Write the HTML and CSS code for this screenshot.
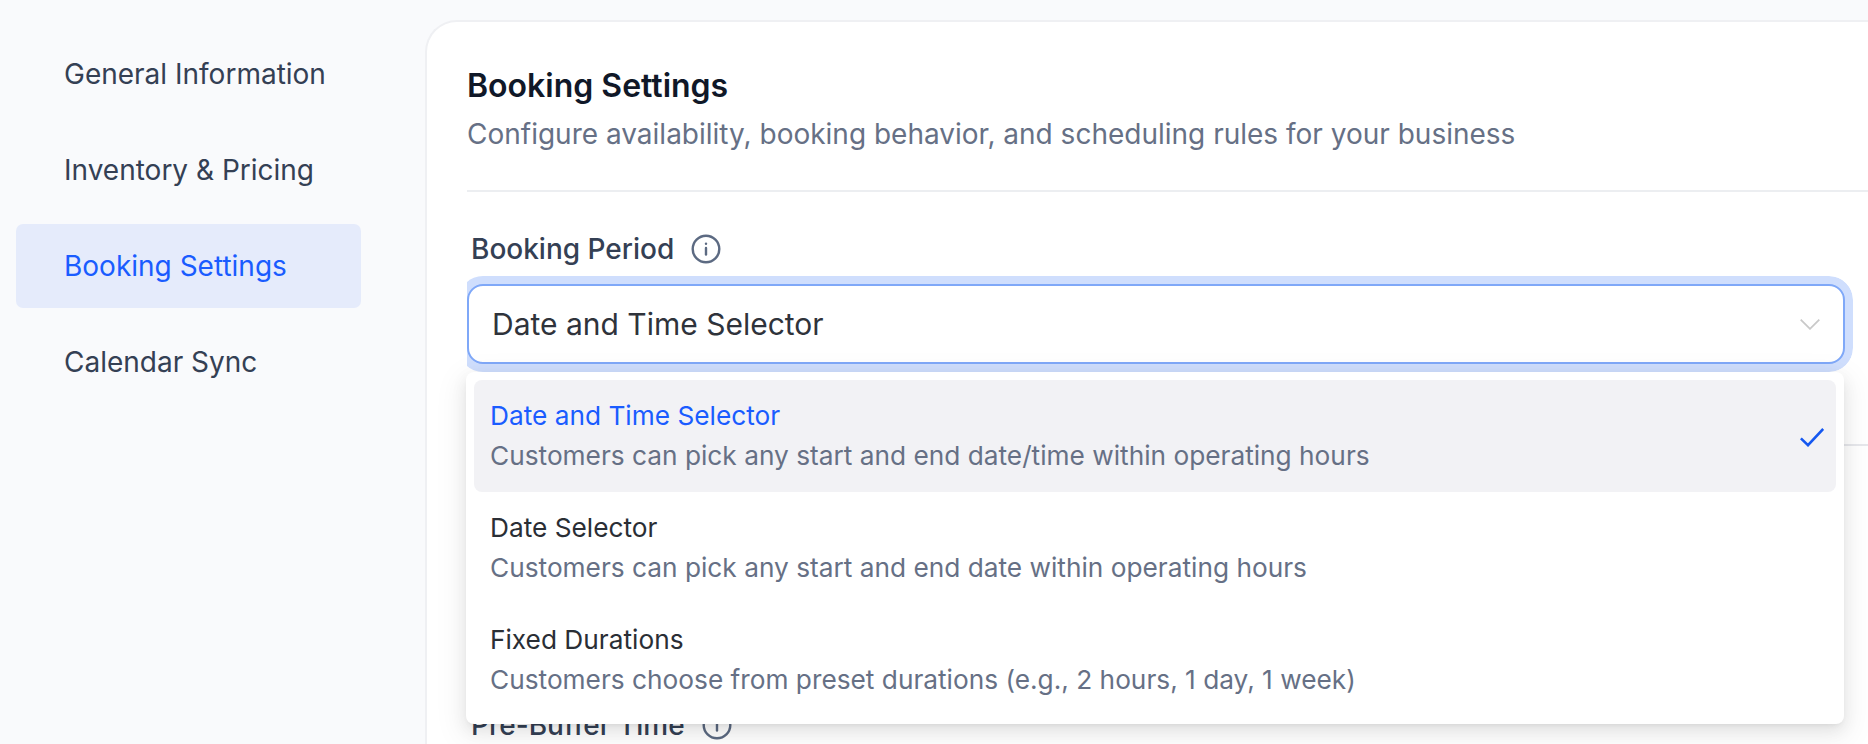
FILE: index.html
```html
<!DOCTYPE html>
<html lang="en">
<head>
  <meta charset="UTF-8">
  <title>Booking Settings</title>
  <link rel="stylesheet" href="styles.css">
</head>
<body>
  <nav class="sidebar">
    <a class="nav-item" href="#">General Information</a>
    <a class="nav-item" href="#">Inventory &amp; Pricing</a>
    <a class="nav-item active" href="#">Booking Settings</a>
    <a class="nav-item" href="#">Calendar Sync</a>
  </nav>

  <main class="card">
    <header class="card-header">
      <h1>Booking Settings</h1>
      <p>Configure availability, booking behavior, and scheduling rules for your business</p>
    </header>

    <section class="field booking-period">
      <label class="field-label">
        Booking Period
        <svg class="info-icon" viewBox="0 0 30 30" fill="none" stroke="currentColor" stroke-width="2.4" stroke-linecap="round">
          <circle cx="15" cy="15" r="13.3"/>
          <path d="M15 14v6.5"/>
          <path d="M15 9.6v.2"/>
        </svg>
      </label>
      <div class="select">
        <span>Date and Time Selector</span>
        <svg class="chevron" viewBox="0 0 20 11" fill="none" stroke="currentColor" stroke-width="1.8">
          <path d="M.7.7 10 9.8 19.3.7"/>
        </svg>
      </div>
    </section>

    <section class="field pre-buffer">
      <label class="field-label">
        Pre-Buffer Time
        <svg class="info-icon" viewBox="0 0 30 30" fill="none" stroke="currentColor" stroke-width="2.4" stroke-linecap="round">
          <circle cx="15" cy="15" r="13.3"/>
          <path d="M15 14v6.5"/>
          <path d="M15 9.6v.2"/>
        </svg>
      </label>
    </section>
  </main>

  <div class="dropdown">
    <div class="option selected">
      <div class="option-text">
        <div class="option-title">Date and Time Selector</div>
        <div class="option-desc">Customers can pick any start and end date/time within operating hours</div>
      </div>
      <svg class="check" viewBox="0 0 24 19" fill="none" stroke="currentColor" stroke-width="2.6">
        <path d="M.9 10.4 8 17.2 23.2 1"/>
      </svg>
    </div>
    <div class="option">
      <div class="option-text">
        <div class="option-title">Date Selector</div>
        <div class="option-desc">Customers can pick any start and end date within operating hours</div>
      </div>
    </div>
    <div class="option">
      <div class="option-text">
        <div class="option-title">Fixed Durations</div>
        <div class="option-desc">Customers choose from preset durations (e.g., 2 hours, 1 day, 1 week)</div>
      </div>
    </div>
  </div>
</body>
</html>
```

FILE: styles.css
```css
html, body {
  height: 100%;
}

body {
  margin: 0;
  display: flex;
  overflow: hidden;
  background: #f9fafc;
  font-family: Inter, "Noto Sans", sans-serif;
  color: #344054;
}

.sidebar {
  flex: none;
  box-sizing: border-box;
  width: 345px;
  margin-left: 16px;
  padding-top: 32px;
  display: flex;
  flex-direction: column;
  gap: 12px;
}

.nav-item {
  height: 84px;
  box-sizing: border-box;
  display: flex;
  align-items: center;
  padding-left: 48px;
  border-radius: 7px;
  font-size: 28px;
  color: #344054;
  text-decoration: none;
}

.nav-item.active {
  background: #e5ebfb;
  color: #1a5cff;
}

.card {
  flex: none;
  width: 1600px;
  margin: 20px 0 0 64px;
  padding: 46px 40px 0;
  background: #fff;
  border: 2px solid #eff0f3;
  border-right: 0;
  border-bottom: 0;
  border-radius: 32px 0 0 0;
}

.card-header {
  padding-bottom: 36px;
  border-bottom: 2px solid #eceef1;
}

.card-header h1 {
  margin: 0;
  font-size: 32px;
  font-weight: 600;
  line-height: 36px;
  color: #101828;
}

.card-header p {
  margin: 10px 0 0;
  font-size: 28px;
  line-height: 40px;
  color: #667085;
}

.field-label {
  display: flex;
  align-items: center;
  gap: 17px;
  padding-left: 4px;
  font-size: 28px;
  font-weight: 500;
  line-height: 36px;
  color: #344054;
}

.info-icon {
  width: 30px;
  height: 30px;
  color: #5c6a82;
}

.booking-period {
  padding: 39px 0 80px;
  border-bottom: 2px solid #e7e8ec;
}

.booking-period .field-label {
  margin-bottom: 17px;
}

.select {
  width: 1378px;
  height: 80px;
  box-sizing: border-box;
  display: flex;
  align-items: center;
  justify-content: space-between;
  padding: 0 23px;
  border: 2px solid #7fa8f8;
  border-radius: 16px;
  box-shadow: 0 0 0 8px #cfdefd;
  clip-path: inset(-8px -8px -8px 0 round 0 24px 24px 0);
  background: #fff;
  font-size: 30px;
  color: #2f333b;
}

.chevron {
  width: 20px;
  height: 11px;
  color: #c9c9c9;
}

.pre-buffer {
  padding-top: 261px;
}

.dropdown {
  position: absolute;
  left: 466px;
  top: 372px;
  width: 1378px;
  box-sizing: border-box;
  padding: 8px;
  background: #fff;
  border-radius: 8px;
  box-shadow: 0 6px 16px 0 rgba(0, 0, 0, .08), 0 3px 6px -4px rgba(0, 0, 0, .12), 0 9px 28px 8px rgba(0, 0, 0, .05);
}

.option {
  height: 112px;
  box-sizing: border-box;
  display: flex;
  align-items: center;
  justify-content: space-between;
  padding: 0 12px 0 16px;
  border-radius: 8px;
}

.option.selected {
  background: #f2f2f5;
}

.option-title {
  font-size: 26.25px;
  line-height: 40px;
  color: #2a2e35;
}

.selected .option-title {
  color: #1a5cff;
}

.option-desc {
  font-size: 26.25px;
  line-height: 40px;
  color: #667085;
}

.check {
  width: 24px;
  height: 19px;
  margin-top: 3px;
  color: #1558f0;
}
```
